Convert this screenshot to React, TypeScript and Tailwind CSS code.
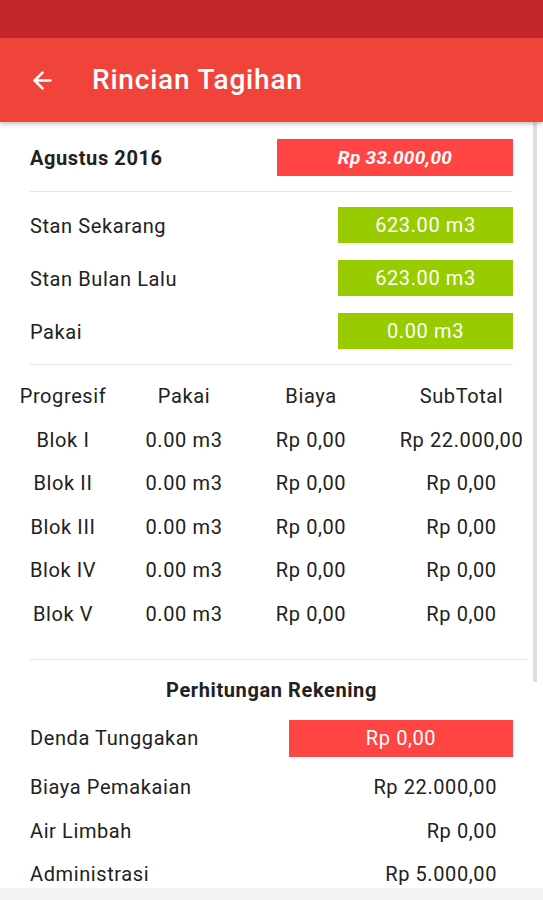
import { ArrowLeft } from 'lucide-react'

const blocks = [
  { name: 'Blok I', pakai: '0.00 m3', biaya: 'Rp 0,00', sub: 'Rp 22.000,00' },
  { name: 'Blok II', pakai: '0.00 m3', biaya: 'Rp 0,00', sub: 'Rp 0,00' },
  { name: 'Blok III', pakai: '0.00 m3', biaya: 'Rp 0,00', sub: 'Rp 0,00' },
  { name: 'Blok IV', pakai: '0.00 m3', biaya: 'Rp 0,00', sub: 'Rp 0,00' },
  { name: 'Blok V', pakai: '0.00 m3', biaya: 'Rp 0,00', sub: 'Rp 0,00' },
]

const meters = [
  { label: 'Stan Sekarang', value: '623.00 m3' },
  { label: 'Stan Bulan Lalu', value: '623.00 m3' },
  { label: 'Pakai', value: '0.00 m3' },
]

const cols = 'grid grid-cols-[126px_116px_138px_163px] text-center'

export default function App() {
  return (
    <div className="relative h-[900px] w-[543px] overflow-hidden bg-white font-['Roboto',sans-serif] text-[20px] leading-[28px] tracking-[0.6px] text-[#212121]">
      <div className="h-[38px] bg-[#c4262b]" />
      <div className="relative z-10 flex h-[84px] items-center bg-[#f0443a] shadow-[0_2px_4px_rgba(0,0,0,0.25)]">
        <ArrowLeft className="ml-[29px] h-[27px] w-[27px] text-white" strokeWidth={2.4} />
        <h1 className="ml-[36px] text-[28px] font-medium tracking-[0.8px] text-white">Rincian Tagihan</h1>
      </div>

      {/* scrollbar */}
      <div className="absolute right-[6px] top-[122px] h-[560px] w-[4px] bg-[#e0e0e0]" />

      <div className="px-[30px]">
        <div className="flex h-[69px] items-center justify-between pt-[2px]">
          <span className="font-bold">Agustus 2016</span>
          <div className="flex h-[37px] w-[236px] items-center justify-center bg-[#ff4444] text-[19px] font-bold italic tracking-[0.3px] text-white">
            Rp 33.000,00
          </div>
        </div>
        <div className="h-px bg-[#e6e6e6]" />

        <div className="flex flex-col gap-[17px] pb-[15px] pt-[15px]">
          {meters.map(m => (
            <div key={m.label} className="flex h-[36px] items-center justify-between">
              <span className="pt-[1px]">{m.label}</span>
              <div className="flex h-[36px] w-[175px] items-center justify-center bg-[#99cc00] text-white">
                {m.value}
              </div>
            </div>
          ))}
        </div>
        <div className="h-px bg-[#e6e6e6]" />
      </div>

      <div className="pt-[17px]">
        <div className={`${cols} h-[28px] items-center`}>
          <span>Progresif</span>
          <span>Pakai</span>
          <span>Biaya</span>
          <span>SubTotal</span>
        </div>
        {blocks.map(b => (
          <div key={b.name} className={`${cols} mt-[15.5px] h-[28px] items-center`}>
            <span>{b.name}</span>
            <span>{b.pakai}</span>
            <span>{b.biaya}</span>
            <span>{b.sub}</span>
          </div>
        ))}
      </div>

      <div className="ml-[30px] mr-[16px] mt-[31px] h-px bg-[#e6e6e6]" />

      <div className="px-[30px]">
        <div className="flex h-[60px] items-center justify-center font-bold">Perhitungan Rekening</div>
        <div className="flex h-[37px] items-center justify-between">
          <span>Denda Tunggakan</span>
          <div className="flex h-[37px] w-[224px] items-center justify-center bg-[#ff4444] text-white">
            Rp 0,00
          </div>
        </div>
        <div className="mt-[16px] flex h-[28px] items-center justify-between pr-[16px]">
          <span>Biaya Pemakaian</span>
          <span>Rp 22.000,00</span>
        </div>
        <div className="mt-[16px] flex h-[28px] items-center justify-between pr-[16px]">
          <span>Air Limbah</span>
          <span>Rp 0,00</span>
        </div>
        <div className="mt-[15px] flex h-[28px] items-center justify-between pr-[16px]">
          <span>Administrasi</span>
          <span>Rp 5.000,00</span>
        </div>
      </div>

      <div className="absolute bottom-0 left-0 h-[12px] w-full bg-[#f2f2f2]" />
    </div>
  )
}
